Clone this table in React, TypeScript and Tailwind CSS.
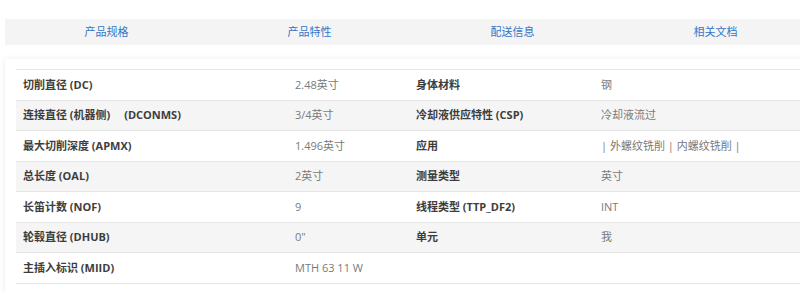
const tabs = ["产品规格", "产品特性", "配送信息", "相关文档"];

const rows: [string, string, string, string][] = [
  ["切削直径 (DC)", "2.48英寸", "身体材料", "钢"],
  ["连接直径 (机器侧) \u3000(DCONMS)", "3/4英寸", "冷却液供应特性 (CSP)", "冷却液流过"],
  ["最大切削深度 (APMX)", "1.496英寸", "应用", "| 外螺纹铣削 | 内螺纹铣削 |"],
  ["总长度 (OAL)", "2英寸", "测量类型", "英寸"],
  ["长笛计数 (NOF)", "9", "线程类型 (TTP_DF2)", "INT"],
  ["轮毂直径 (DHUB)", "0\"", "单元", "我"],
  ["主插入标识 (MIID)", "MTH 63 11 W", "", ""],
];

export default function App() {
  return (
    <div
      className="w-[800px] h-[292px] overflow-hidden bg-white pt-[19px]"
      style={{ fontFamily: '"Open Sans", "Noto Sans CJK SC", sans-serif' }}
    >
      {/* Tabs */}
      <div className="ml-[5px] w-[812px] h-[26px] bg-[#f4f4f4] grid grid-cols-4">
        {tabs.map((t) => (
          <div key={t} className="flex items-center justify-center text-[11px] text-[#3274c8]">
            {t}
          </div>
        ))}
      </div>

      {/* Spec card */}
      <div className="mt-[14px] ml-[5px] w-[812px] bg-white shadow-[0_0_6px_rgba(0,0,0,0.08)] pt-[10px] px-[11px] pb-4">
        <div className="border-t border-[#e6e6e6]">
          {rows.map(([l1, v1, l2, v2], i) => (
            <div
              key={l1}
              className={`flex h-[30.5px] items-center border-b border-[#e6e6e6] text-[11px] ${
                i % 2 === 1 ? "bg-[#f5f5f5]" : "bg-white"
              }`}
            >
              <div className="w-[271px] pl-[7px] font-bold text-[#3d3d3d]">{l1}</div>
              <div className="w-[121px] pl-[8px] text-[#7a7a7a]">{v1}</div>
              <div className="w-[185px] pl-[8px] font-bold text-[#3d3d3d]">{l2}</div>
              <div className="flex-1 pl-[8px] text-[#7a7a7a]">{v2}</div>
            </div>
          ))}
        </div>
      </div>
    </div>
  );
}
